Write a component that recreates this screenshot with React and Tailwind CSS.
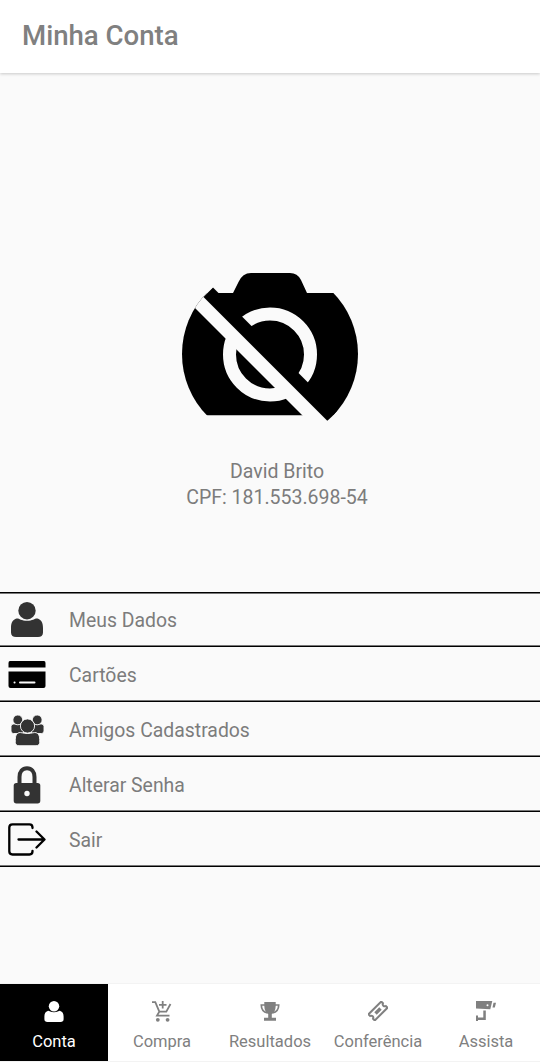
import { useState } from 'react';

const UserIcon = ({ className }) => (
  <svg viewBox="0 0 32 35" className={className} fill="currentColor">
    <path d="M5.5 16.500C2 17.500 0 20.500 0 26V30.500C0 33.500 2 35 5 35H27C30 35 32 33.500 32 30.500V26C32 20.500 30 17.500 26.500 16.500C24 16 22 18.800 16 18.800C10 18.800 8 16 5.500 16.500Z" />
    <ellipse cx="16" cy="8.700" rx="8.700" ry="8.700" />
  </svg>
);

const CardIcon = () => (
  <svg width="38" height="28" viewBox="0 0 38 28">
    <path d="M2 0H36Q37.500 0 37.500 2V6.500H0.500V2Q0.500 0 2 0Z" />
    <path d="M0.500 10.500H37.500V25Q37.500 27 35.500 27H2.500Q0.500 27 0.500 25Z" />
    <path d="M6.500 21.500H6.600M12 21.500H26.500" stroke="#fafafa" strokeWidth="2" strokeLinecap="round" />
  </svg>
);

const FriendsIcon = () => (
  <svg width="33" height="31" viewBox="0 0 33 31" fill="#333" stroke="#fafafa" strokeWidth="0.900">
    <rect x="0" y="9" width="13" height="9.500" rx="2.500" />
    <rect x="20" y="9" width="13" height="9.500" rx="2.500" />
    <circle cx="6.800" cy="4.900" r="4.900" />
    <circle cx="26.200" cy="4.900" r="4.900" />
    <path d="M8 17.600C5.500 18.500 4.300 20.500 4.300 24.500V27.500C4.300 29.500 5.800 30.700 8 30.700H25C27.200 30.700 28.700 29.500 28.700 27.500V24.500C28.700 20.500 27.500 18.500 25 17.600C23 17.200 20.500 18.500 16.500 18.500S10 17.200 8 17.600Z" />
    <circle cx="16.500" cy="11" r="7.100" />
  </svg>
);

const LockIcon = () => (
  <svg width="28" height="38" viewBox="0 0 28 38">
    <path d="M6.500 18V11C6.500 5.500 9.500 2.200 14 2.200S21.500 5.500 21.500 11V18" fill="none" stroke="#333" strokeWidth="4" />
    <rect x="0.700" y="16.900" width="26.600" height="20.600" rx="2.700" fill="#333" />
    <circle cx="14" cy="27.500" r="2.700" fill="#fafafa" />
  </svg>
);

const ExitIcon = () => (
  <svg width="38" height="34" viewBox="0 0 38 34" fill="none" stroke="#000" strokeWidth="2.300" strokeLinecap="round" strokeLinejoin="round">
    <path d="M24.500 5V4.500Q24.500 1.300 21.500 1.300H4.500Q1.300 1.300 1.300 4.500V28.300Q1.300 31.500 4.500 31.500H21.500Q24.500 31.500 24.500 28.300V27.800" />
    <path d="M10.500 16.500H36M28.500 8.500L36.500 16.500L28.500 24.500" />
  </svg>
);

const NoPhoto = () => (
  <svg width="176" height="150" viewBox="182 272 176 150" className="block">
    <clipPath id="avatar">
      <circle cx="270" cy="354" r="88" />
    </clipPath>
    <g clipPath="url(#avatar)">
      <path d="M170 293H233L238.500 282Q242.500 273 251 273H290Q297.500 273 301 280L307 293H370V415.300H170Z" />
      <circle cx="270" cy="354.500" r="40.500" fill="none" stroke="#fafafa" strokeWidth="13" />
      {/* gap along the slash */}
      <path d="M170 283V250H208V293L350 435H322Z" fill="#fafafa" />
      <path d="M213 287.500L359 433.500L349.500 443L203.500 297Z" />
    </g>
  </svg>
);

const CartIcon = () => (
  <svg width="20" height="21" viewBox="0 0 20 21" fill="none" stroke="currentColor" strokeWidth="1.800">
    <path d="M0 1.200H3.300L7.300 10.700H14.300L18.500 3M7.300 10.700L5 14.600H17.500M10.700 0V7.500M7 3.800H14.500" />
    <circle cx="5.800" cy="18.800" r="1.900" fill="currentColor" stroke="none" />
    <circle cx="15.600" cy="18.800" r="1.900" fill="currentColor" stroke="none" />
  </svg>
);

const TrophyIcon = () => (
  <svg width="20" height="20" viewBox="0 0 20 20" fill="currentColor">
    <path d="M4.300 1H15.700V5Q15.500 11 11.800 13V16.800H16V19.700H4V16.800H8.200V13Q4.500 11 4.300 5Z" />
    <path d="M5 4H1.300C1.300 8 3 11 7.500 11.900M15 4H18.700C18.700 8 17 11 12.500 11.900" fill="none" stroke="currentColor" strokeWidth="1.700" />
  </svg>
);

const TicketIcon = () => (
  <svg width="20" height="20" viewBox="0 0 20 20">
    <g transform="rotate(-45 10 10)">
      <path d="M1 5.600H19V8A2.100 2.100 0 0 0 19 12V14.400H1V12A2.100 2.100 0 0 0 1 8Z" fill="none" stroke="currentColor" strokeWidth="2" />
      <rect x="6.500" y="8.300" width="7" height="3.400" fill="currentColor" />
    </g>
  </svg>
);

const CameraIcon = () => (
  <svg width="20" height="20" viewBox="0 0 20 20" fill="currentColor">
    <path fillRule="evenodd" d="M0 0H16.300L14.300 8.200L0 7.500ZM11.500 3.300A1 1 0 1 0 11.500 5.300A1 1 0 1 0 11.500 3.300Z" />
    <path d="M17.500 1.800H20L18.800 6.500H16.500Z" />
    <path d="M7.300 9.500H9.800V19H2V20H0V14.500H2V16.500H7.300Z" />
  </svg>
);

const menu = [
  { label: 'Meus Dados', icon: <UserIcon className="w-8 h-[35px] text-[#333]" /> },
  { label: 'Cartões', icon: <CardIcon /> },
  { label: 'Amigos Cadastrados', icon: <FriendsIcon /> },
  { label: 'Alterar Senha', icon: <LockIcon /> },
  { label: 'Sair', icon: <ExitIcon /> },
];

const tabs = [
  { label: 'Conta', icon: <UserIcon className="w-5 h-[21px]" /> },
  { label: 'Compra', icon: <CartIcon /> },
  { label: 'Resultados', icon: <TrophyIcon /> },
  { label: 'Conferência', icon: <TicketIcon /> },
  { label: 'Assista', icon: <CameraIcon /> },
];

const App = () => {
  const [active, setActive] = useState('Conta');

  return (
    <div className="w-[540px] h-[1062px] flex flex-col overflow-hidden bg-[#fafafa] font-[Roboto,sans-serif] text-[#7c7c7c]">
      <header className="h-[73px] shrink-0 bg-white shadow-[0_1px_3px_rgba(0,0,0,0.2)] px-[22px]">
        <h1 className="text-[27.600px] leading-[72px] font-medium text-[#808080]">Minha Conta</h1>
      </header>

      <section className="h-[519px] shrink-0 pt-[199px] flex flex-col items-center">
        <NoPhoto />
        <div className="mt-[37px] pl-[14px] text-center text-[19.500px] leading-[26px]">
          <p>David Brito</p>
          <p>CPF: 181.553.698-54</p>
        </div>
      </section>

      <ul className="border-t border-black">
        {menu.map((item) => (
          <li
            key={item.label}
            className="h-[55px] pt-[2px] first:h-[54px] first:pt-0 flex items-center border-b border-black shadow-[inset_0_-1px_0_#777] first:shadow-[inset_0_1px_0_#777,inset_0_-1px_0_#777]"
          >
            <div className="w-[54px] flex justify-center">{item.icon}</div>
            <span className="pl-[15px] pt-[2px] text-[19.400px] leading-6">{item.label}</span>
          </li>
        ))}
      </ul>

      <nav className="mt-auto h-[79px] flex bg-white border-t border-b border-[#f3f3f3]">
        {tabs.map((tab) => (
          <button
            key={tab.label}
            onClick={() => setActive(tab.label)}
            className={`w-[108px] flex flex-col items-center pt-[17px] ${active === tab.label ? 'bg-black text-white' : 'text-[#808080]'}`}
          >
            <span className="h-[21px]">{tab.icon}</span>
            <span className="mt-[8px] text-[16.500px] leading-6">{tab.label}</span>
          </button>
        ))}
      </nav>
    </div>
  );
};

export default App;
